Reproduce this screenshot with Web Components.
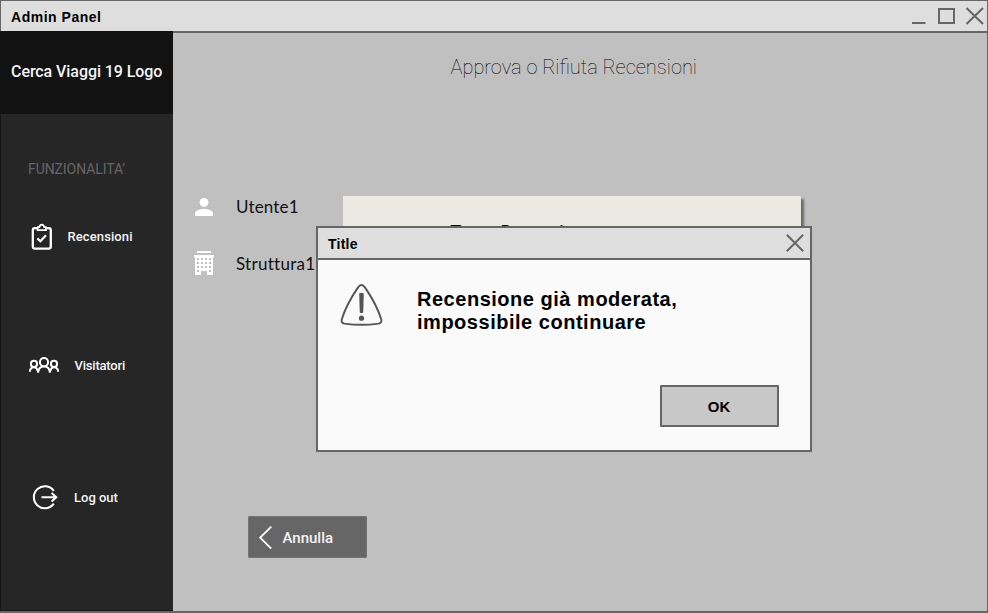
<!DOCTYPE html>
<html lang="it">
<head>
<meta charset="utf-8">
<title>Admin Panel</title>
<style>
html,body{margin:0;width:988px;height:613px;overflow:hidden;background:#c0c0c0}
body{font-family:Roboto,"Liberation Sans",sans-serif}
</style>
</head>
<body>
<admin-window></admin-window>
<script>
const define = (name, html) => customElements.define(name, class extends HTMLElement {
  constructor() {
    super();
    this.attachShadow({ mode: 'open' }).innerHTML = html;
  }
});

define('title-bar', `
<style>
:host{display:flex;align-items:center;justify-content:space-between;box-sizing:border-box;background:#dedede;border-bottom:2px solid #666;color:#000;font:bold 14px/20px "Liberation Sans",sans-serif}
svg,::slotted(svg){display:block}
::slotted(span){padding-top:2px}
</style>
<slot></slot><slot name="controls"></slot>`);

define('nav-item', `
<style>
:host{display:flex;align-items:center;height:40px;color:#f4f4f4;font:500 13px/20px Roboto,sans-serif;white-space:nowrap}
.icon{display:flex;width:var(--icon-col,46px)}
</style>
<span class="icon"><slot name="icon"></slot></span><span><slot></slot></span>`);

define('side-bar', `
<style>
:host{display:flex;flex-direction:column;box-sizing:border-box;width:173px;background:#262626;border-left:1px solid #171717;border-bottom:1px solid #171717;margin-top:-2px;position:relative}
.logo{height:83px;margin-left:-1px;background:#121212;color:#f4f4f4;display:flex;align-items:center;padding-left:11px;box-sizing:border-box;font:500 16px/20px Roboto,sans-serif;letter-spacing:-.07px;white-space:nowrap;padding-bottom:2px}
.section{margin:45px 0 0 27px;color:#656565;font:400 14px/20px Roboto,sans-serif;letter-spacing:-.08px}
.items{display:flex;flex-direction:column}
nav-item{padding-left:27px}
.r{margin-top:38px;--icon-col:39.5px;letter-spacing:.1px}
.v{margin-top:89px;--icon-col:46.5px;letter-spacing:-.2px}
.l{margin-top:92px;--icon-col:46px}
svg{display:block;fill:none;stroke:#fff}
</style>
<div class="logo"><span>Cerca Viaggi 19 Logo</span></div>
<div class="section">FUNZIONALITA’</div>
<div class="items">
<nav-item class="r"><svg slot="icon" width="30" height="28" viewBox="0 0 30 28"><rect x="4.8" y="5.2" width="18" height="20.4" rx="2" stroke-width="2.3"/><path d="M9.6 7.2V4.2H11.3Q12 1.7 13.8 1.7T16.3 4.2H18V7.2Z" fill="#262626" stroke-width="1.8" stroke-linejoin="round"/><path d="M9.4 15.4L12.4 18.2L18 12.2" stroke-width="2.2"/></svg>Recensioni</nav-item>
<nav-item class="v"><svg slot="icon" width="32" height="18" viewBox="0 0 32 18" stroke-width="2"><circle cx="16" cy="5.2" r="4.1"/><circle cx="6" cy="6.9" r="3.1"/><circle cx="26" cy="6.9" r="3.1"/><path d="M10.1 15.8Q10.5 9.6 16 9.6T21.9 15.8M1.8 14.8Q2.1 10.2 6 10.2Q8.8 10.2 10.1 14.8M21.9 14.8Q23.2 10.2 26 10.2Q29.9 10.2 30.2 14.8"/></svg>Visitatori</nav-item>
<nav-item class="l"><svg slot="icon" width="32" height="26" viewBox="-.5 .8 32 26"><path d="M25.3 6.6A11 11 0 1 0 25.3 19.4" stroke-width="2"/><path d="M13 13H27.5M23.1 8.8L27.8 13L23.1 17.2" stroke-width="2"/></svg>Log out</nav-item>
</div>`);

define('info-row', `
<style>
:host{display:flex;align-items:center;height:30px;color:#111;font:400 17px/22px Lato,sans-serif;white-space:nowrap}
.icon{display:flex;width:43px}
</style>
<span class="icon"><slot name="icon"></slot></span><span><slot></slot></span>`);

define('review-card', `
<style>
:host{display:block;box-sizing:border-box;width:458px;height:150px;background:#ece9e2;box-shadow:3px 3px 2px #6b6b6b;padding:24px 0 0 107px;overflow:hidden;font:400 18px/22px Lato,sans-serif;letter-spacing:.5px;color:#000;white-space:nowrap}
</style><slot></slot>`);

define('back-button', `
<style>
:host{display:flex;align-items:center;width:119px;height:42px;box-sizing:border-box;padding-left:9.5px;gap:11px;background:#666;border:1px solid #747474;border-radius:1px;color:#f4f4f4;font:500 15px/20px Roboto,sans-serif}
svg{display:block}
span{padding-top:1px}
</style>
<svg width="13" height="24" viewBox="0 -.7 13 24" fill="none" stroke="#fff" stroke-width="1.8"><path d="M12.3 1L1.2 12L12.3 23"/></svg><span><slot></slot></span>`);

define('main-panel', `
<style>
:host{display:flex;flex-direction:column;flex:1;background:#c0c0c0}
h1{margin:23px 0 0 277.5px;font:100 20px/22px Roboto,sans-serif;color:#000;white-space:nowrap}
.content{display:flex;margin:118px 0 0 20px;height:150px}
.meta{width:150.4px;display:flex;flex-direction:column;gap:27px;margin-top:-4px}
.u{letter-spacing:.15px}
.s{letter-spacing:.28px}
back-button{margin:170px 0 0 75px}
svg{display:block;fill:#fff}
</style>
<h1>Approva o Rifiuta Recensioni</h1>
<div class="content">
<div class="meta">
<info-row class="u"><svg slot="icon" width="22" height="22" viewBox="0 0 22 22"><circle cx="11" cy="6.4" r="4.4"/><path d="M2 20V17.6C2 14.8 7 13.1 11 13.1S20 14.8 20 17.6V20Z"/></svg>Utente1</info-row>
<info-row class="s"><svg slot="icon" width="22" height="26" viewBox="0 0 22 26"><path d="M4 0H18V2H4ZM1 4H21V6H20V24H14V20H8V24H2V6H1Z"/><g fill="#c0c0c0"><path d="M4 7H6V9H4ZM8 7H10V9H8ZM12 7H14V9H12ZM16 7H18V9H16ZM4 11H6V13H4ZM8 11H10V13H8ZM12 11H14V13H12ZM16 11H18V13H16ZM4 15H6V17H4ZM8 15H10V17H8ZM12 15H14V17H12ZM16 15H18V17H16ZM4 19H6V21H4ZM16 19H18V21H16Z"/></g></svg>Struttura1</info-row>
</div>
<review-card>Testo Recensione</review-card>
</div>
<back-button>Annulla</back-button>`);

define('modal-dialog', `
<style>
:host{display:flex;flex-direction:column;box-sizing:border-box;width:496px;height:226px;border:2px solid #666;background:#fafafa;font-family:"Liberation Sans",sans-serif;color:#000}
title-bar{height:32px;padding:0 6px 0 10px;letter-spacing:.25px}
.body{display:flex;height:84px;padding:22px 0 0 22px;gap:34px}
p{margin:6px 0 0;font:bold 20px/23px "Liberation Sans",sans-serif;letter-spacing:.52px;white-space:nowrap}
button{align-self:flex-end;margin:19px 31px 0 0;box-sizing:border-box;width:119px;height:42px;padding:1px 1px 0 0;border:2px solid #666;border-radius:1px;background:#c8c8c8;color:#000;font:bold 15px/20px "Liberation Sans",sans-serif}
svg{display:block}
</style>
<title-bar><span>Title</span><svg slot="controls" width="18" height="18" viewBox="0 0 18 18" stroke="#666" stroke-width="2"><path d="M.8.8L17.2 17.2M17.2.8L.8 17.2"/></svg></title-bar>
<div class="body">
<svg width="43" height="45" viewBox="0 0 43 45" fill="none" stroke="#555" stroke-width="1.9"><path d="M21.4 3Q23.5 3 25 5.4C32 15.8 38 26.5 41.2 37.3Q42.2 40.9 38.5 41.6Q21.5 44 4.5 41.6Q.8 40.9 1.8 37.3C5 26.5 11 15.8 18 5.4Q19.5 3 21.4 3Z"/><path d="M19.2 11.5Q21.5 10 23.8 11.5L23.2 30.5Q21.5 32 19.8 30.5Z" fill="#555" stroke="none"/><circle cx="21.5" cy="36.2" r="2.6" fill="#555" stroke="none"/></svg>
<p>Recensione già moderata,<br>impossibile continuare</p>
</div>
<button>OK</button>`);

define('admin-window', `
<style>
:host{display:flex;flex-direction:column;position:relative;box-sizing:border-box;width:988px;height:613px;border:1px solid #666;border-bottom-width:2px;background:#c0c0c0}
title-bar{height:32px;padding:0 3px 0 10px;letter-spacing:.52px}
.body{display:flex;flex:1;margin-left:-1px}
modal-dialog{position:absolute;left:315px;top:225px}
svg{display:block}
</style>
<title-bar><span>Admin Panel</span><svg slot="controls" width="72" height="18" viewBox="0 0 72 18" fill="none" stroke="#666" stroke-width="2"><path d="M-.5 16H13.5M54.5 1L71 17M71 1L54.5 17"/><rect x="27" y="2" width="15" height="14"/></svg></title-bar>
<div class="body"><side-bar></side-bar><main-panel></main-panel></div>
<modal-dialog></modal-dialog>`);
</script>
</body>
</html>
